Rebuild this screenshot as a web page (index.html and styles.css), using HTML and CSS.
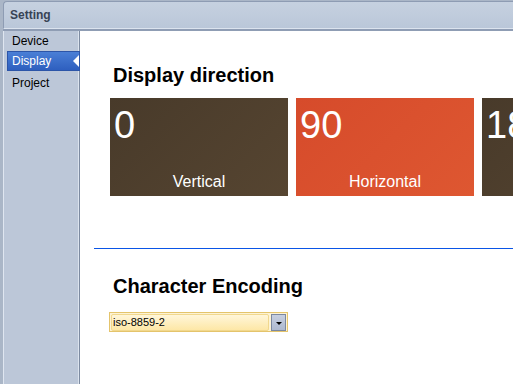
FILE: index.html
```html
<!DOCTYPE html>
<html lang="en">

<head>
    <meta charset="UTF-8">
    <meta name="viewport" content="width=device-width, initial-scale=1.0">
    <title>Setting</title>
    <link rel="stylesheet" href="styles.css">
</head>

<body>
    <div class="window">
        <div class="titlebar">Setting</div>
        <div class="body">
            <nav class="sidebar">
                <div class="nav-item">Device</div>
                <div class="nav-item active">Display</div>
                <div class="nav-item project">Project</div>
            </nav>
            <main class="content">
                <h2 class="heading">Display direction</h2>
                <div class="tiles">
                    <div class="tile dark">
                        <span class="tile-num">0</span>
                        <span class="tile-label">Vertical</span>
                    </div>
                    <div class="tile orange">
                        <span class="tile-num">90</span>
                        <span class="tile-label">Horizontal</span>
                    </div>
                    <div class="tile dark">
                        <span class="tile-num">180</span>
                        <span class="tile-label">Vertical</span>
                    </div>
                </div>
                <div class="divider"></div>
                <h2 class="heading heading-enc">Character Encoding</h2>
                <div class="combo">
                    <div class="combo-field">iso-8859-2</div>
                    <div class="combo-btn"><span class="arrow"></span></div>
                </div>
            </main>
        </div>
    </div>
</body>

</html>
```

FILE: styles.css
```css
body {
    margin: 0;
    width: 513px;
    height: 384px;
    overflow: hidden;
    font-family: "Liberation Sans", Arial, sans-serif;
    background: #aab6c7;
}

.window {
    display: flex;
    flex-direction: column;
    height: 384px;
}

.titlebar {
    height: 26px;
    line-height: 27px;
    margin: 1px 0 0 3px;
    padding-left: 6px;
    border-top: 1px solid #8e9cb3;
    border-left: 1px solid #8e9cb3;
    border-top-left-radius: 4px;
    border-bottom: 1px solid #dbe3ee;
    box-shadow: 0 2px 0 #8f9db4;
    background: linear-gradient(#c6d1e0, #bac7d9);
    font-size: 12px;
    font-weight: bold;
    color: #374355;
}

.body {
    flex: 1;
    display: flex;
    margin-top: 2px;
}

.sidebar {
    width: 71px;
    margin-left: 3px;
    padding-left: 3px;
    border-left: 1px solid #dfe6f0;
    border-right: 1px solid #dbe3ee;
    box-shadow: 1px 0 0 #7d8ba1;
    background: #bcc7d8;
    font-size: 12px;
}

.nav-item {
    position: relative;
    height: 20px;
    line-height: 21px;
    padding-left: 5px;
    color: #000;
}

.nav-item.active {
    margin-right: -2px;
    height: 18px;
    line-height: 19px;
    padding-left: 4px;
    border: 1px solid #2c55a8;
    background: linear-gradient(#4a7fd6, #2e5fbf);
    color: #fff;
}

.nav-item.active::after {
    content: "";
    position: absolute;
    right: 0;
    top: 3px;
    border-top: 6px solid transparent;
    border-bottom: 6px solid transparent;
    border-right: 6px solid #fff;
}

.nav-item.project {
    margin-top: 2px;
}

.content {
    flex: 1;
    margin-left: 1px;
    padding-left: 30px;
    background: #fff;
    overflow: hidden;
}

.heading {
    margin: 32px 0 0 3px;
    font-size: 20px;
    line-height: 24px;
    font-weight: bold;
    color: #000;
}

.tiles {
    display: flex;
    gap: 8px;
    margin-top: 11px;
    width: 600px;
}

.tile {
    flex: none;
    width: 178px;
    height: 98px;
    display: flex;
    flex-direction: column;
    justify-content: space-between;
    color: #fff;
}

.tile.dark {
    background: linear-gradient(135deg, #483a2a, #564531);
}

.tile.orange {
    background: linear-gradient(135deg, #d64b2b, #de5731);
}

.tile-num {
    padding: 8px 0 0 4px;
    font-size: 38px;
    line-height: 38px;
}

.tile-label {
    padding-bottom: 5px;
    text-align: center;
    font-size: 16px;
    line-height: 18px;
}

.divider {
    margin: 52px 0 0 -16px;
    border-top: 1px solid #0a55e6;
}

.heading-enc {
    margin-top: 25px;
}

.combo {
    display: flex;
    gap: 2px;
    width: 175px;
    height: 16px;
    margin: 14px 0 0 -1px;
    padding: 1px;
    border: 1px solid #e4c46c;
    background: #fdf3d4;
}

.combo-field {
    flex: 1;
    height: 15px;
    line-height: 15px;
    padding-left: 1px;
    border: 1px solid #f1d88e;
    border-radius: 2px;
    background: linear-gradient(#fff6da, #fde7a6);
    font-size: 11px;
    color: #000;
}

.combo-btn {
    width: 13px;
    height: 15px;
    display: flex;
    align-items: center;
    justify-content: center;
    border: 1px solid #7b88a0;
    background: linear-gradient(#c6cfe0, #aeb9cf);
}

.arrow {
    margin-top: 1px;
    border-left: 3px solid transparent;
    border-right: 3px solid transparent;
    border-top: 3px solid #000;
}
```
